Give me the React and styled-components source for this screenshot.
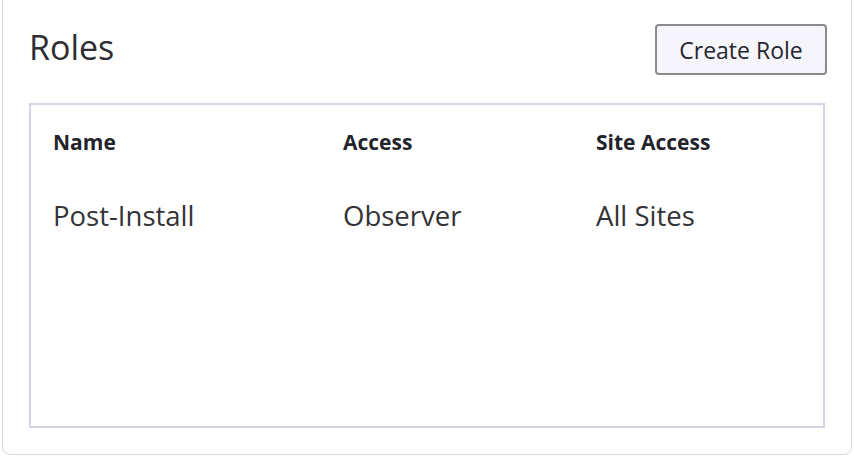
import styled, { createGlobalStyle } from 'styled-components'

const GlobalStyle = createGlobalStyle`
  html, body {
    margin: 0;
    padding: 0;
    background: #ffffff;
    font-family: "Open Sans", "Liberation Sans", sans-serif;
  }
`

const roles = [
  { name: 'Post-Install', access: 'Observer', site: 'All Sites' }
]

export default function App() {
  return (
    <Page>
      <GlobalStyle />
      <Card>
        <CardHeader>
          <Title>Roles</Title>
          <CreateButton>Create Role</CreateButton>
        </CardHeader>
        <TableBox>
          <Row>
            <HeadCell>Name</HeadCell>
            <HeadCell>Access</HeadCell>
            <HeadCell>Site Access</HeadCell>
          </Row>
          {roles.map(r => (
            <Row key={r.name}>
              <Cell>{r.name}</Cell>
              <Cell>{r.access}</Cell>
              <Cell>{r.site}</Cell>
            </Row>
          ))}
        </TableBox>
      </Card>
    </Page>
  )
}

const Page = styled.div`
  width: 854px;
  height: 458px;
  padding: 0 2px 3px 2px;
  box-sizing: border-box;
  overflow: hidden;
`
const Card = styled.div`
  height: calc(100% + 10px);
  box-sizing: border-box;
  margin-top: -10px;
  padding: 34px 26px 26px 26px;
  border: 1.5px solid #d8d8e5;
  border-radius: 8px;
  display: flex;
  flex-direction: column;
`
const CardHeader = styled.div`
  display: flex;
  align-items: flex-start;
  justify-content: space-between;
  height: 78px;
  flex-shrink: 0;
`
const Title = styled.h1`
  margin: 0;
  font-size: 34px;
  font-weight: 400;
  color: #2e2e33;
  line-height: 44px;
`
const CreateButton = styled.button`
  width: 172px;
  height: 51px;
  box-sizing: border-box;
  margin: -1px -2px 0 0;
  font-family: "Open Sans", "Liberation Sans", sans-serif;
  font-size: 23px;
  color: #26262f;
  background: #f6f5fb;
  border: 2px solid #8a8a8e;
  border-radius: 4px;
  padding: 0;
`
const TableBox = styled.div`
  flex: 1;
  border: 2px solid #d4d4e2;
  padding: 17px 22px;
  display: flex;
  flex-direction: column;
  gap: 33px;
`
const Row = styled.div`
  display: grid;
  grid-template-columns: 290px 253px 1fr;
  height: 40px;
  align-items: center;
`
const HeadCell = styled.div`
  font-size: 21px;
  font-weight: 700;
  color: #23232b;
`
const Cell = styled.div`
  font-size: 27.5px;
  color: #333338;
`
